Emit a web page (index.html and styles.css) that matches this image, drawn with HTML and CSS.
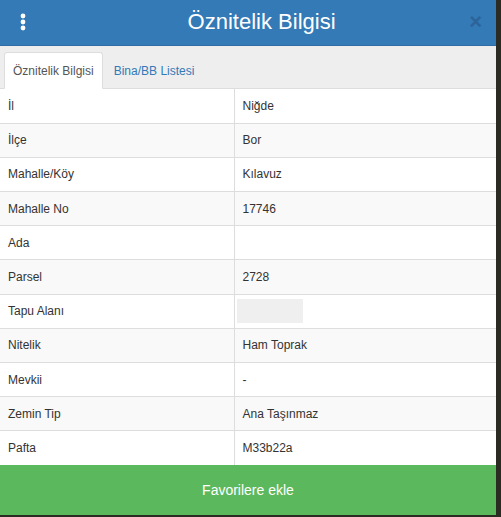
FILE: index.html
```html
<!DOCTYPE html>
<html lang="tr">
<head>
<meta charset="utf-8">
<title>Öznitelik Bilgisi</title>
<link rel="stylesheet" href="styles.css">
</head>
<body>
<div class="panel">
  <header class="panel-head">
    <span class="menu-btn" aria-label="Menü">
      <svg width="6" height="18" viewBox="0 0 6 18"><circle cx="3" cy="3" r="2.4" fill="#fff"/><circle cx="3" cy="9" r="2.4" fill="#fff"/><circle cx="3" cy="15" r="2.4" fill="#fff"/></svg>
    </span>
    <h1 class="panel-title">Öznitelik Bilgisi</h1>
    <span class="close-btn">&times;</span>
  </header>
  <nav class="tabs">
    <span class="tab active">Öznitelik Bilgisi</span>
    <span class="tab">Bina/BB Listesi</span>
  </nav>
  <table class="attr-table">
    <tbody>
      <tr><td>İl</td><td>Niğde</td></tr>
      <tr><td>İlçe</td><td>Bor</td></tr>
      <tr><td>Mahalle/Köy</td><td>Kılavuz</td></tr>
      <tr><td>Mahalle No</td><td>17746</td></tr>
      <tr><td>Ada</td><td></td></tr>
      <tr><td>Parsel</td><td>2728</td></tr>
      <tr><td>Tapu Alanı</td><td class="masked-cell"><span class="masked"></span></td></tr>
      <tr><td>Nitelik</td><td>Ham Toprak</td></tr>
      <tr><td>Mevkii</td><td>-</td></tr>
      <tr><td>Zemin Tip</td><td>Ana Taşınmaz</td></tr>
      <tr><td>Pafta</td><td>M33b22a</td></tr>
    </tbody>
  </table>
  <button class="fav-btn">Favorilere ekle</button>
</div>
</body>
</html>
```

FILE: styles.css
```css
* { box-sizing: border-box; }

html, body {
  margin: 0;
  padding: 0;
}

body {
  background: #2b2a23;
  font-family: "Liberation Sans", Arial, sans-serif;
  width: 501px;
  height: 517px;
  overflow: hidden;
}

.panel {
  width: 496px;
  background: #fff;
  display: flex;
  flex-direction: column;
}

.panel-head {
  height: 46px;
  background: #337ab7;
  border-bottom: 1px solid #2e6ca3;
  display: flex;
  align-items: center;
  padding: 0 14px 0 20px;
}

.menu-btn {
  display: flex;
  width: 20px;
  margin-top: -2px;
}

.panel-title {
  flex: 1;
  margin: 0;
  padding-left: 14px;
  text-align: center;
  color: #fff;
  font-size: 22px;
  font-weight: normal;
  line-height: 1;
  margin-top: -2px;
}

.close-btn {
  color: #2a5b8f;
  font-size: 22px;
  font-weight: bold;
  line-height: 1;
  opacity: 0.7;
  margin-top: -1px;
}

.tabs {
  height: 43px;
  background: #eee;
  border-bottom: 1px solid #ddd;
  display: flex;
  align-items: flex-end;
  padding-left: 4px;
}

.tab {
  font-size: 12px;
  color: #337ab7;
  padding: 0 10px;
  height: 37px;
  line-height: 36px;
  margin-bottom: -1px;
  border: 1px solid transparent;
  border-radius: 3px 3px 0 0;
}

.tab.active {
  background: #fff;
  color: #555;
  border-color: #ddd #ddd #fff;
  padding: 0 8px;
}

.attr-table {
  width: 100%;
  border-collapse: collapse;
  font-size: 12px;
  color: #333;
}

.attr-table td {
  height: 34.2px;
  padding: 0 8px;
  border-top: 1px solid #ddd;
  vertical-align: middle;
}

.attr-table tr:first-child td { border-top: none; }

.attr-table td:first-child {
  width: 234px;
  border-right: 1px solid #ddd;
}

.attr-table tr:nth-child(even) td { background: #f9f9f9; }

.masked-cell { padding-left: 2px !important; }

.masked {
  display: block;
  width: 66px;
  height: 24px;
  background: #efefef;
}

.fav-btn {
  height: 50px;
  border: none;
  background: #5cb85c;
  color: #fff;
  font-family: inherit;
  font-size: 14px;
  padding: 0;
}
```
